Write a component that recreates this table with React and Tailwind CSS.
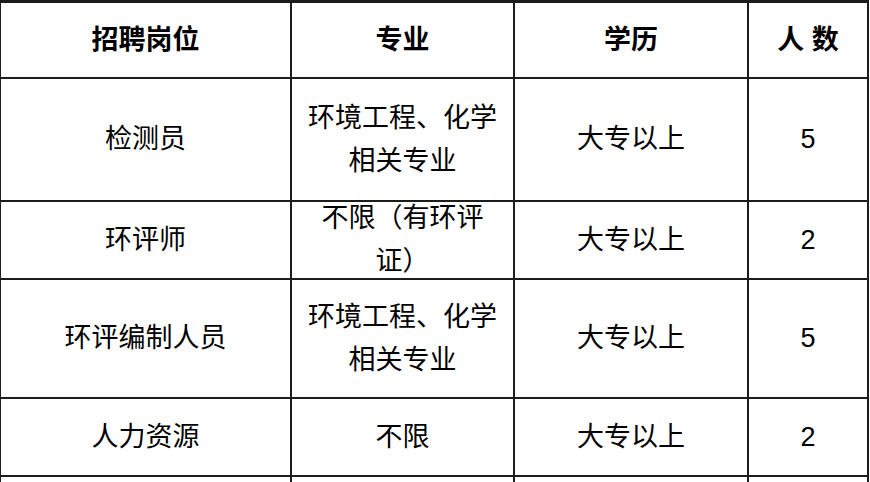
import React from "react";

const rows = [
  { job: "检测员", major: ["环境工程、化学", "相关专业"], edu: "大专以上", num: "5", h: "h-[123px]", inner: "h-[119px]" },
  { job: "环评师", major: ["不限（有环评", "证）"], edu: "大专以上", num: "2", h: "h-[78px]", inner: "h-[74px]" },
  { job: "环评编制人员", major: ["环境工程、化学", "相关专业"], edu: "大专以上", num: "5", h: "h-[119px]", inner: "h-[115px]" },
  { job: "人力资源", major: ["不限"], edu: "大专以上", num: "2", h: "h-[78px]", inner: "h-[74px]" },
];

const cell = "border-2 border-[#1c1c1c] text-center align-middle p-0";

export default function App() {
  return (
    <div
      className="w-[870px] h-[482px] overflow-hidden bg-white text-black"
      style={{ fontFamily: '"Liberation Sans", "Noto Sans CJK SC", sans-serif' }}
    >
      <table className="w-[868px] border-collapse table-fixed -mt-[1px] -ml-[1px]">
        <colgroup>
          <col className="w-[291px]" />
          <col className="w-[223px]" />
          <col className="w-[234px]" />
          <col className="w-[120px]" />
        </colgroup>
        <thead>
          <tr className="h-[77px]">
            <th className={`${cell} border-t-[4px] text-[27px] font-bold`}>招聘岗位</th>
            <th className={`${cell} border-t-[4px] text-[27px] font-bold`}>专业</th>
            <th className={`${cell} border-t-[4px] text-[27px] font-bold`}>学历</th>
            <th className={`${cell} border-t-[4px] text-[27px] font-bold`}>人 数</th>
          </tr>
        </thead>
        <tbody>
          {rows.map((r, i) => (
            <tr key={i} className={r.h}>
              <td className={`${cell} text-[27px]`}>{r.job}</td>
              <td className={`${cell} text-[27px] leading-[43px]`}>
                <div className={`${r.inner} flex flex-col items-center justify-center overflow-visible`}>
                  {r.major.map((m, j) => (
                    <div key={j}>{m}</div>
                  ))}
                </div>
              </td>
              <td className={`${cell} text-[27px]`}>{r.edu}</td>
              <td className={`${cell} text-[27px]`}>{r.num}</td>
            </tr>
          ))}
          <tr className="h-[80px]">
            <td className={cell}></td>
            <td className={cell}></td>
            <td className={cell}></td>
            <td className={cell}></td>
          </tr>
        </tbody>
      </table>
    </div>
  );
}
